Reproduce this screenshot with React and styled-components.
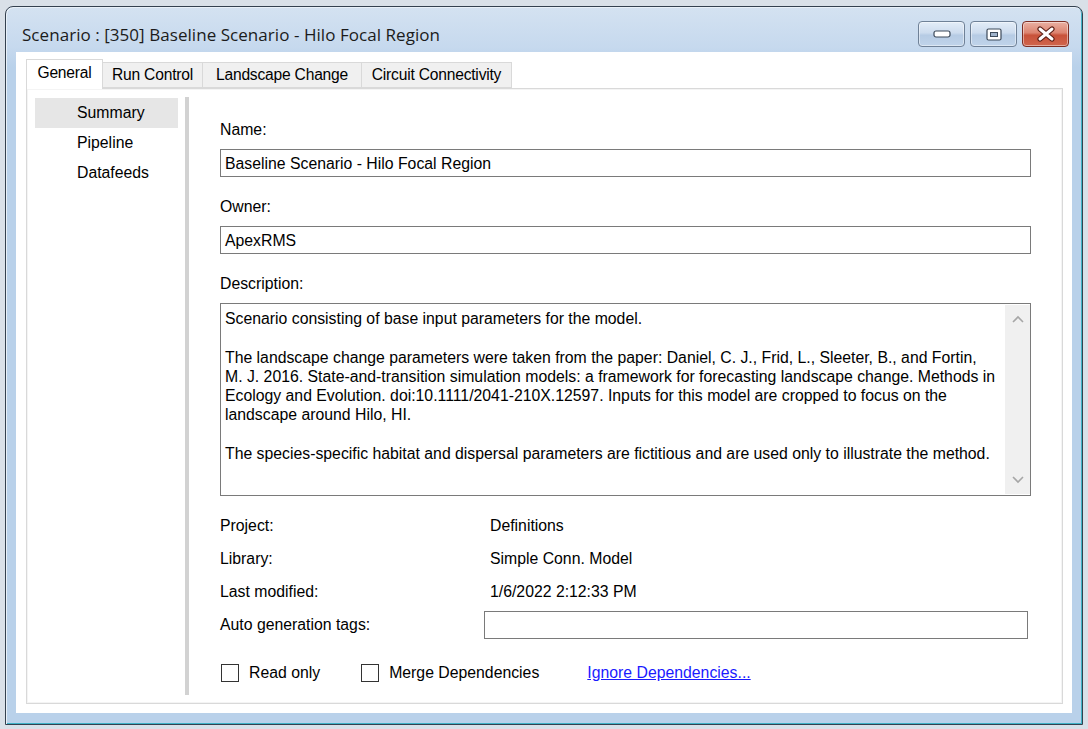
import React from 'react';
import styled, { createGlobalStyle } from 'styled-components';

const GlobalStyle = createGlobalStyle`
  html, body {
    margin: 0;
    padding: 0;
    background: #d9e0e8;
    font-family: "Liberation Sans", Arial, sans-serif;
  }
`;

const descriptionLines = [
  'Scenario consisting of base input parameters for the model.',
  '',
  'The landscape change parameters were taken from the paper: Daniel, C. J., Frid, L., Sleeter, B., and Fortin,',
  'M. J. 2016. State-and-transition simulation models: a framework for forecasting landscape change. Methods in',
  'Ecology and Evolution. doi:10.1111/2041-210X.12597. Inputs for this model are cropped to focus on the',
  'landscape around Hilo, HI.',
  '',
  'The species-specific habitat and dispersal parameters are fictitious and are used only to illustrate the method.',
];

const tabs = [
  { label: 'General', width: 77, active: true },
  { label: 'Run Control', width: 101 },
  { label: 'Landscape Change', width: 160 },
  { label: 'Circuit Connectivity', width: 151 },
];

const navItems = [
  { label: 'Summary', active: true },
  { label: 'Pipeline' },
  { label: 'Datafeeds' },
];

const infoRows = [
  { label: 'Project:', value: 'Definitions' },
  { label: 'Library:', value: 'Simple Conn. Model' },
  { label: 'Last modified:', value: '1/6/2022 2:12:33 PM' },
];

const App = () => {
  return (
    <>
      <GlobalStyle />
      <Desktop>
        <Window>
          <TitleBar>
            <Title>Scenario : [350] Baseline Scenario - Hilo Focal Region</Title>
            <Controls>
              <CaptionButton>
                <svg width="18" height="8" viewBox="0 0 18 8">
                  <rect x="1" y="1" width="16" height="6" rx="2" fill="#fff" stroke="#3d4a5a" strokeWidth="1.2" />
                </svg>
              </CaptionButton>
              <CaptionButton>
                <svg width="16" height="13" viewBox="0 0 16 13">
                  <rect x="1" y="1" width="14" height="11" rx="1.5" fill="#fff" stroke="#3d4a5a" strokeWidth="1.2" />
                  <rect x="4.5" y="4.5" width="7" height="4" fill="#9fb3cb" stroke="#3d4a5a" strokeWidth="1" />
                </svg>
              </CaptionButton>
              <CaptionButton $close>
                <svg width="20" height="16" viewBox="0 0 20 16">
                  <path d="M4 3 L16 13 M16 3 L4 13" stroke="#5a1d14" strokeWidth="5.2" strokeLinecap="round" />
                  <path d="M4 3 L16 13 M16 3 L4 13" stroke="#fff" strokeWidth="3" strokeLinecap="round" />
                </svg>
              </CaptionButton>
            </Controls>
          </TitleBar>

          <ClientArea>
            <TabStrip>
              {tabs.map((t) => (
                <Tab key={t.label} $active={t.active} $w={t.width}>
                  {t.label}
                </Tab>
              ))}
            </TabStrip>

            <TabPanel>
              <NavList>
                {navItems.map((n) => (
                  <NavItem key={n.label} $active={n.active}>
                    {n.label}
                  </NavItem>
                ))}
              </NavList>

              <Splitter />

              <Content>
                <FieldLabel>Name:</FieldLabel>
                <TextBox>Baseline Scenario - Hilo Focal Region</TextBox>

                <FieldLabel $gap>Owner:</FieldLabel>
                <TextBox>ApexRMS</TextBox>

                <FieldLabel $gap>Description:</FieldLabel>
                <MemoBox>
                  <MemoText>
                    {descriptionLines.map((line, i) => (
                      <MemoLine key={i}>{line || '\u00a0'}</MemoLine>
                    ))}
                  </MemoText>
                  <ScrollBar>
                    <svg width="14" height="10" viewBox="0 0 14 10">
                      <polyline points="2,8 7,3 12,8" fill="none" stroke="#a6a6a6" strokeWidth="1.6" />
                    </svg>
                    <svg width="14" height="10" viewBox="0 0 14 10">
                      <polyline points="2,2 7,7 12,2" fill="none" stroke="#a6a6a6" strokeWidth="1.6" />
                    </svg>
                  </ScrollBar>
                </MemoBox>

                <InfoGrid>
                  {infoRows.map((r) => (
                    <React.Fragment key={r.label}>
                      <InfoLabel>{r.label}</InfoLabel>
                      <InfoValue>{r.value}</InfoValue>
                    </React.Fragment>
                  ))}
                  <InfoLabel>Auto generation tags:</InfoLabel>
                  <TagsBox />
                </InfoGrid>

                <OptionsRow>
                  <CheckItem>
                    <CheckBox />
                    Read only
                  </CheckItem>
                  <CheckItem $last>
                    <CheckBox />
                    Merge Dependencies
                  </CheckItem>
                  <LinkText href="#">Ignore Dependencies...</LinkText>
                </OptionsRow>
              </Content>
            </TabPanel>
          </ClientArea>
        </Window>
      </Desktop>
    </>
  );
};

const Desktop = styled.div`
  width: 1088px;
  height: 729px;
  padding: 6px 0 0 5px;
  box-sizing: border-box;
  overflow: hidden;
`;

const Window = styled.div`
  width: 1078px;
  height: 719px;
  box-sizing: border-box;
  border: 1px solid #34414f;
  border-radius: 8px 8px 0 0;
  background: linear-gradient(180deg, #d4e2f1 0px, #c6d9ee 40px, #b9d1ea 60px, #b9d1ea 100%);
  box-shadow: inset 1px 1px 0 #e8f0f8, inset -1px -1px 0 #3fb2c6;
  display: flex;
  flex-direction: column;
`;

const TitleBar = styled.div`
  height: 45px;
  flex-shrink: 0;
  display: flex;
  align-items: flex-start;
  justify-content: space-between;
  padding: 14px 13px 0 16px;
  box-sizing: border-box;
`;

const Title = styled.div`
  font-family: "Open Sans", "Liberation Sans", sans-serif;
  font-size: 17px;
  line-height: 27px;
  color: #1b1b1b;
  letter-spacing: 0.05px;
`;

const Controls = styled.div`
  display: flex;
  gap: 5px;
`;

const CaptionButton = styled.div`
  width: 47px;
  height: 26px;
  box-sizing: border-box;
  border-radius: 4px;
  border: 1px solid ${({ $close }) => ($close ? '#7d2d22' : '#6f8197')};
  background: ${({ $close }) =>
    $close
      ? 'linear-gradient(180deg, #eab0a2 0%, #dc8470 45%, #c8523a 55%, #d0654c 100%)'
      : 'linear-gradient(180deg, #e3edf8 0%, #cddcee 45%, #b6cbe4 55%, #c0d4ea 100%)'};
  box-shadow: inset 0 0 0 1px rgba(255, 255, 255, 0.45);
  display: flex;
  align-items: center;
  justify-content: center;
`;

const ClientArea = styled.div`
  flex: 1;
  margin: 0 10px 11px 10px;
  background: #ffffff;
  padding: 7px 9px 9px 10px;
  display: flex;
  flex-direction: column;
  min-height: 0;
`;

const TabStrip = styled.div`
  height: 29px;
  flex-shrink: 0;
  display: flex;
  align-items: flex-end;
  position: relative;
  z-index: 1;
`;

const Tab = styled.div`
  width: ${({ $w }) => $w}px;
  height: ${({ $active }) => ($active ? 30 : 26)}px;
  margin-bottom: ${({ $active }) => ($active ? -1 : 0)}px;
  margin-right: -1px;
  box-sizing: border-box;
  border: 1px solid #d9d9d9;
  border-bottom: ${({ $active }) => ($active ? 'none' : '1px solid #d9d9d9')};
  background: ${({ $active }) => ($active ? '#ffffff' : '#f0f0f0')};
  font-size: 15.6px;
  color: #000;
  display: flex;
  align-items: center;
  justify-content: center;
  padding-bottom: ${({ $active }) => ($active ? 4 : 0)}px;
  letter-spacing: -0.2px;
  white-space: nowrap;
  position: relative;
  z-index: ${({ $active }) => ($active ? 2 : 1)};
`;

const TabPanel = styled.div`
  flex: 1;
  border: 1px solid #d9d9d9;
  box-shadow: inset 0 0 0 1px #f4f4f4;
  display: flex;
  padding: 9px 31px 8px 8px;
  min-height: 0;
`;

const NavList = styled.div`
  width: 143px;
  flex-shrink: 0;
  display: flex;
  flex-direction: column;
`;

const NavItem = styled.div`
  height: 30px;
  display: flex;
  align-items: center;
  padding-left: 42px;
  font-size: 15.8px;
  color: #000;
  background: ${({ $active }) => ($active ? '#e6e6e6' : 'transparent')};
`;

const Splitter = styled.div`
  width: 4px;
  flex-shrink: 0;
  margin: -1px 0 0 7px;
  background: #d2d2d2;
`;

const Content = styled.div`
  flex: 1;
  margin-left: 31px;
  padding-top: 21px;
  display: flex;
  flex-direction: column;
  font-size: 15.8px;
  color: #000;
`;

const FieldLabel = styled.div`
  line-height: 20px;
  padding-top: 1px;
  margin-top: ${({ $gap }) => ($gap ? 19 : 0)}px;
  margin-bottom: 9px;
`;

const TextBox = styled.div`
  height: 28px;
  box-sizing: border-box;
  border: 1px solid #7a7a7a;
  padding: 1px 4px 0;
  display: flex;
  align-items: center;
`;

const MemoBox = styled.div`
  height: 193px;
  box-sizing: border-box;
  border: 1px solid #7a7a7a;
  display: flex;
`;

const MemoText = styled.div`
  flex: 1;
  padding: 5px 4px 0 4px;
  line-height: 19.3px;
  white-space: nowrap;
  overflow: hidden;
`;

const MemoLine = styled.div``;

const ScrollBar = styled.div`
  width: 25px;
  margin: 1px 0;
  background: #f0f0f0;
  display: flex;
  flex-direction: column;
  align-items: center;
  justify-content: space-between;
  padding: 9px 0 9px;
  box-sizing: border-box;
`;

const InfoGrid = styled.div`
  margin-top: 15px;
  display: grid;
  grid-template-columns: 270px 1fr;
  grid-auto-rows: 28px;
  row-gap: 5.3px;
  align-items: center;
`;

const InfoLabel = styled.div`
  padding-top: 1px;
`;

const InfoValue = styled.div`
  padding-top: 1px;
`;

const TagsBox = styled.div`
  height: 28px;
  box-sizing: border-box;
  margin-left: -6px;
  margin-right: 3px;
  border: 1px solid #7a7a7a;
`;

const OptionsRow = styled.div`
  margin-top: 24px;
  height: 20px;
  display: flex;
  align-items: center;
  padding-left: 1px;
`;

const CheckItem = styled.label`
  display: flex;
  align-items: center;
  gap: 10px;
  margin-right: ${({ $last }) => ($last ? 48 : 41)}px;
`;

const CheckBox = styled.span`
  width: 18px;
  height: 18px;
  box-sizing: border-box;
  border: 1px solid #333333;
  background: #fff;
`;

const LinkText = styled.a`
  color: #1a1aff;
  text-decoration: underline;
`;

export default App;
